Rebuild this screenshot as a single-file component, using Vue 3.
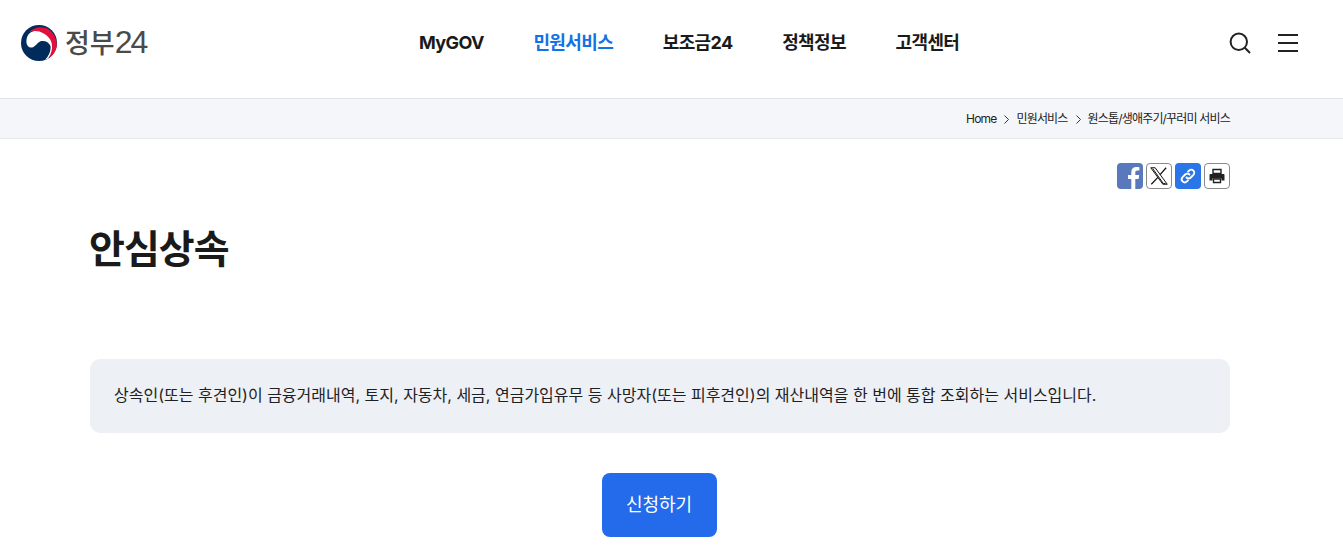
<script setup>
const nav = [
  { label: 'MyGOV', active: false },
  { label: '민원서비스', active: true },
  { label: '보조금24', active: false },
  { label: '정책정보', active: false },
  { label: '고객센터', active: false },
]
const crumbs = ['Home', '민원서비스', '원스톱/생애주기/꾸러미 서비스']
</script>

<template>
  <div class="page">
    <header class="header">
      <div class="logo">
        <svg class="emblem" width="36" height="36" viewBox="0 0 36 36">
          <circle cx="18" cy="18" r="18" fill="#002b5c" />
          <path d="M27 33.600C32.500 28 33.500 21 30 14C26 7.500 19 5 13 6C7 7.200 5 13 5.500 18C6 21 8 23 11 22.500C14 22 16 18 19 16.500C23 15 28 17 29.500 21C30 26 28 31 24 34.700Z" fill="#fff" />
          <path d="M7.500 7.500C12 3 19 1 25 3C31 5.500 35.500 12 35.800 19C36 25 32 31 27 33.600C31 28 32.500 21 29.500 15C26 9 19 5.500 13 6C11 6.200 9 6.800 7.500 7.500Z" fill="#e2103c" />
        </svg>
        <span class="logo-text">정부<span class="logo-num">24</span></span>
      </div>

      <nav class="nav">
        <a v-for="item in nav" :key="item.label" class="nav-item" :class="{ active: item.active }">{{ item.label }}</a>
      </nav>

      <div class="tools">
        <svg width="24" height="24" viewBox="0 0 24 24" fill="none" stroke="#222" stroke-width="2">
          <circle cx="10.800" cy="10.800" r="8.200" />
          <path d="M16.800 16.800L22 22" />
        </svg>
        <div class="burger"><i></i><i></i><i></i></div>
      </div>
    </header>

    <div class="crumb-bar">
      <div class="crumbs">
        <template v-for="(c, i) in crumbs" :key="c">
          <svg v-if="i > 0" class="chev" width="5" height="9" viewBox="0 0 5 9" fill="none" stroke="#333" stroke-width="1">
            <path d="M.5 .5L4.500 4.500L.5 8.500" />
          </svg>
          <span class="crumb">{{ c }}</span>
        </template>
      </div>
    </div>

    <main class="main">
      <div class="share">
        <span class="sq fb">
          <svg width="26" height="26" viewBox="0 0 26 26"><path d="M18.300 26V16h3.300l.6-4h-3.900V9.600c0-1.200.5-2 2.100-2h2V4.200c-.5-.1-1.700-.2-3-.2-3.100 0-5.100 1.800-5.100 5.200V12H11v4h3.300v10z" fill="#fff" /></svg>
        </span>
        <span class="sq line">
          <svg width="22" height="22" viewBox="0 0 20 20" fill="none" stroke="#111" stroke-width=".9"><path d="M2.500 2.500h4L17.500 17.500h-4zM4.300 3.200l9.600 13.600h2" /><path d="M16.500 2.500L11 8.800M9 11.200L3 17.500" stroke-width="1.100" /></svg>
        </span>
        <span class="sq link">
          <svg width="18" height="18" viewBox="0 0 18 18" fill="none" stroke="#fff" stroke-width="1.800" stroke-linecap="round"><path d="M7.500 10.500a3 3 0 0 0 4.300 0l2.600-2.600a3 3 0 0 0-4.300-4.300L9 4.700" /><path d="M10.500 7.500a3 3 0 0 0-4.300 0L3.600 10.100a3 3 0 0 0 4.300 4.300L9 13.300" /></svg>
        </span>
        <span class="sq line">
          <svg width="18" height="18" viewBox="0 0 18 18"><path d="M5 2.500h8v4H5z" fill="none" stroke="#222" stroke-width="1.400" /><path d="M1.500 8a1 1 0 0 1 1-1h13a1 1 0 0 1 1 1v5.500h-3v-2h-9v2h-3z" fill="#222" /><path d="M5.500 12h7v3.500h-7z" fill="none" stroke="#222" stroke-width="1.400" /></svg>
        </span>
      </div>

      <h1 class="title">안심상속</h1>

      <div class="notice">상속인(또는 후견인)이 금융거래내역, 토지, 자동차, 세금, 연금가입유무 등 사망자(또는 피후견인)의 재산내역을 한 번에 통합 조회하는 서비스입니다.</div>

      <div class="actions">
        <button class="apply">신청하기</button>
      </div>
    </main>
  </div>
</template>

<style scoped>
.page {
  height: 558px;
  overflow: hidden;
  background: #fff;
  font-family: "Inter", "Noto Sans CJK KR", sans-serif;
  color: #1e2124;
}
.header {
  height: 98px;
  display: flex;
  align-items: center;
  padding: 0 45px 12px 21px;
  box-sizing: border-box;
}
.logo {
  display: flex;
  align-items: center;
  gap: 8px;
  width: 398px;
}
.emblem { flex: none; }
.logo-text {
  font-size: 27px;
  font-weight: 500;
  color: #4a4a4a;
  line-height: 36px;
  white-space: nowrap;
}
.logo-num {
  font-family: "Liberation Sans", sans-serif;
  font-size: 32px;
  font-weight: 400;
  letter-spacing: -2px;
}
.nav {
  display: flex;
  gap: 49.500px;
  flex: 1;
}
.nav-item {
  font-size: 18px;
  font-weight: 700;
  letter-spacing: -0.600px;
  color: #1a1a1a;
  line-height: 28px;
}
.nav-item.active { color: #1273e4; }
.tools {
  display: flex;
  align-items: center;
  gap: 26px;
}
.burger {
  width: 20px;
  display: flex;
  flex-direction: column;
  gap: 6px;
}
.burger i {
  display: block;
  height: 2px;
  background: #222;
}
.crumb-bar {
  height: 41px;
  box-sizing: border-box;
  background: #f5f6fa;
  border-top: 1px solid #e1e3e8;
  border-bottom: 1px solid #e6e7ea;
  display: flex;
  align-items: center;
  justify-content: flex-end;
  padding-right: 113px;
}
.crumbs {
  display: flex;
  align-items: center;
  gap: 7px;
}
.crumb {
  font-size: 12px;
  letter-spacing: -0.820px;
  color: #222;
  line-height: 18px;
}
.chev {
  margin-top: 2px;
  margin-left: 1px;
}
.main {
  width: 1140px;
  margin-left: 90px;
}
.share {
  display: flex;
  justify-content: flex-end;
  gap: 3px;
  padding-top: 24px;
}
.sq {
  width: 26px;
  height: 26px;
  box-sizing: border-box;
  border-radius: 4px;
  display: flex;
  align-items: center;
  justify-content: center;
  overflow: hidden;
}
.fb { background: #5a79bd; }
.link { background: #2a76e8; }
.line { border: 1px solid #8a8a8a; background: #fff; }
.title {
  margin: 33px 0 0 -1px;
  font-size: 39px;
  font-weight: 700;
  letter-spacing: -1px;
  line-height: 54px;
  color: #1a1a1a;
}
.notice {
  margin-top: 83px;
  background: #edf0f4;
  border-radius: 10px;
  padding: 23px 24px 25px;
  font-size: 16px;
  line-height: 26px;
  color: #1e2124;
}
.actions {
  display: flex;
  justify-content: center;
  margin-top: 40px;
  padding-right: 2px;
}
.apply {
  width: 115px;
  height: 64px;
  border: 0;
  border-radius: 8px;
  background: #246beb;
  color: #fff;
  font-family: inherit;
  font-size: 18px;
  padding: 0 0 4px;
}
</style>
